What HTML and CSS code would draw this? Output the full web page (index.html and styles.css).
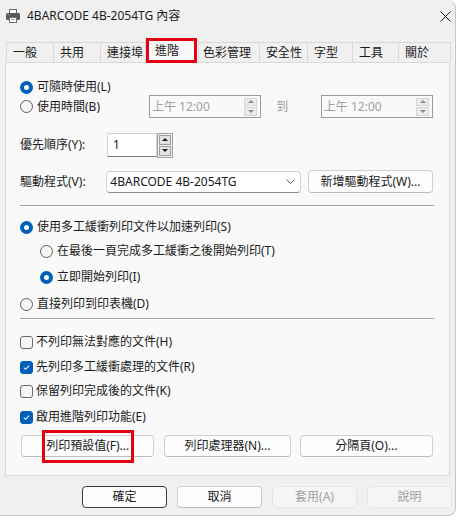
FILE: index.html
```html
<!DOCTYPE html>
<html lang="zh-Hant">
<head>
<meta charset="utf-8">
<title>4BARCODE 4B-2054TG 內容</title>
<link rel="stylesheet" href="styles.css">
</head>
<body>
<div class="window">
  <div class="titlebar">
    <svg class="app-icon" viewBox="0 0 16 16" aria-hidden="true">
      <rect x="4.5" y="1.5" width="7" height="4" fill="#ffffff" stroke="#6e6e6e"/>
      <rect x="1" y="5" width="14" height="7" rx="1.5" fill="#5a5a5a"/>
      <rect x="2.5" y="6.5" width="2" height="1" fill="#9a9a9a"/>
      <rect x="4.5" y="9.5" width="7" height="5" fill="#ffffff" stroke="#6e6e6e"/>
      <line x1="6" y1="11.5" x2="10" y2="11.5" stroke="#a0a0a0"/>
    </svg>
    <span class="title">4BARCODE 4B-2054TG 內容</span>
    <svg class="close" viewBox="0 0 11 11" aria-hidden="true">
      <path d="M0.5 0.5 L10.5 10.5 M10.5 0.5 L0.5 10.5" stroke="#1b1b1b" stroke-width="1" fill="none"/>
    </svg>
  </div>

  <div class="tabs">
    <div class="tab t1">一般</div>
    <div class="tab t2">共用</div>
    <div class="tab t3">連接埠</div>
    <div class="tab t4 active">進階</div>
    <div class="tab t5">色彩管理</div>
    <div class="tab t6">安全性</div>
    <div class="tab t7">字型</div>
    <div class="tab t8">工具</div>
    <div class="tab t9">關於</div>
  </div>

  <div class="panel">
    <div class="opt r1"><span class="radio on"></span><span>可隨時使用(L)</span></div>

    <div class="row r2">
      <div class="opt opt-time"><span class="radio"></span><span>使用時間(B)</span></div>
      <div class="timebox">
        <span class="dim">上午 12:00</span>
        <span class="spin spin-dis"><span class="sb up"></span><span class="sb down"></span></span>
      </div>
      <span class="to dim">到</span>
      <div class="timebox">
        <span class="dim">上午 12:00</span>
        <span class="spin spin-dis"><span class="sb up"></span><span class="sb down"></span></span>
      </div>
    </div>

    <div class="row r3">
      <span class="label">優先順序(Y):</span>
      <div class="numbox">1</div>
      <span class="updown"><span class="sb up"></span><span class="sb down"></span></span>
    </div>

    <div class="row r4">
      <span class="label">驅動程式(V):</span>
      <div class="combo">
        <span>4BARCODE 4B-2054TG</span>
        <svg class="chev" viewBox="0 0 9 5" aria-hidden="true"><path d="M0.5 0.5 L4.5 4.5 L8.5 0.5" fill="none" stroke="#5a5a5a"/></svg>
      </div>
      <div class="btn btn-new">新增驅動程式(W)...</div>
    </div>

    <div class="sep s1"></div>

    <div class="opt o1"><span class="radio on"></span><span>使用多工緩衝列印文件以加速列印(S)</span></div>
    <div class="opt o2 sub"><span class="radio"></span><span>在最後一頁完成多工緩衝之後開始列印(T)</span></div>
    <div class="opt o3 sub"><span class="radio on"></span><span>立即開始列印(I)</span></div>
    <div class="opt o4"><span class="radio"></span><span>直接列印到印表機(D)</span></div>

    <div class="sep s2"></div>

    <div class="opt c1"><span class="check"></span><span>不列印無法對應的文件(H)</span></div>
    <div class="opt c2"><span class="check on"><svg viewBox="0 0 13 13" aria-hidden="true"><path d="M3.3 6.6 L5.4 8.7 L9.6 4.3" fill="none" stroke="#ffffff" stroke-width="1.2"/></svg></span><span>先列印多工緩衝處理的文件(R)</span></div>
    <div class="opt c3"><span class="check"></span><span>保留列印完成後的文件(K)</span></div>
    <div class="opt c4"><span class="check on"><svg viewBox="0 0 13 13" aria-hidden="true"><path d="M3.3 6.6 L5.4 8.7 L9.6 4.3" fill="none" stroke="#ffffff" stroke-width="1.2"/></svg></span><span>啟用進階列印功能(E)</span></div>

    <div class="btnrow">
      <div class="btn b-def">列印預設值(F)...</div>
      <div class="btn b-proc">列印處理器(N)...</div>
      <div class="btn b-sep">分隔頁(O)...</div>
    </div>
  </div>

  <div class="footer">
    <div class="btn fbtn default">確定</div>
    <div class="btn fbtn">取消</div>
    <div class="btn fbtn disabled">套用(A)</div>
    <div class="btn fbtn disabled">說明</div>
  </div>

  <div class="mark mark-tab"></div>
  <div class="mark mark-btn"></div>
</div>
</body>
</html>
```

FILE: styles.css
```css
* { box-sizing: border-box; }
html, body { margin: 0; padding: 0; }
body {
  background: #ffffff;
  font-family: "Noto Sans", "Noto Sans CJK TC", sans-serif;
  font-size: 12px;
  line-height: 16px;
  color: #1b1b1b;
}

.window {
  position: relative;
  width: 456px;
  height: 516px;
  background: #f0f0f0;
  border-right: 1px solid #c6c6c6;
  border-bottom: 1px solid #c6c6c6;
  border-radius: 0 8px 8px 0;
  overflow: hidden;
}

/* title bar */
.titlebar {
  height: 32px;
  display: flex;
  align-items: center;
  padding-left: 5px;
}
.app-icon { width: 16px; height: 16px; margin-right: 6px; flex: none; }
.title { flex: 1; }
.close { width: 11px; height: 11px; margin-right: 4px; flex: none; }

/* tabs */
.tabs {
  display: flex;
  align-items: flex-end;
  height: 22px;
  margin: 8px 0 0 6px;
  position: relative;
  z-index: 1;
}
.tab {
  height: 20px;
  border: 1px solid #d9d9d9;
  border-bottom: none;
  margin-right: -1px;
  padding-left: 6px;
  display: flex;
  align-items: center;
  background: #f0f0f0;
  white-space: nowrap;
}
.t1, .t2, .t3 { width: 48px; }
.t5 { width: 64px; }
.t6 { width: 49px; }
.t7 { width: 46px; }
.t8 { width: 47px; }
.t9 { width: 53px; }
.tab.active {
  position: relative;
  z-index: 2;
  width: 54px;
  height: 23px;
  margin: 0 -3px -1px -2px;
  padding-left: 9px;
  padding-bottom: 2px;
  background: #f9f9f9;
}

/* panel */
.panel {
  margin: 0 5px;
  background: #f9f9f9;
  border: 1px solid #d9d9d9;
  padding: 15px 16px 18px 14px;
}

.row { display: flex; align-items: center; }
.opt { display: flex; align-items: center; height: 20px; white-space: nowrap; }
.r1 { height: 18px; }
.r2 { height: 23px; margin-top: -1px; }
.r3 { height: 24px; margin-top: 15px; }
.r4 { height: 23px; margin-top: 13px; }

.opt-time { width: 130px; }
.sub { padding-left: 20px; }

.radio {
  width: 13px;
  height: 13px;
  border-radius: 50%;
  border: 1px solid #5f5f5f;
  background: #f6f6f6;
  margin-right: 4px;
  flex: none;
  display: flex;
  align-items: center;
  justify-content: center;
}
.radio.on { border: none; background: #005fb8; }
.radio.on::after {
  content: "";
  width: 5px;
  height: 5px;
  border-radius: 50%;
  background: #ffffff;
}

.check {
  width: 13px;
  height: 13px;
  border: 1px solid #6a6a6a;
  border-radius: 3px;
  background: #f6f6f6;
  margin-right: 3px;
  flex: none;
  display: flex;
}
.check.on { background: #005fb8; border-color: #005fb8; }
.check svg { width: 11px; height: 11px; }

.dim { color: #a0a0a0; }

.timebox {
  width: 113px;
  height: 23px;
  border: 1px solid #9a9a9a;
  background: #f9f9f9;
  display: flex;
  align-items: center;
  justify-content: space-between;
  padding: 0 3px 0 2px;
}
.to { width: 60px; padding-left: 15px; }

.spin {
  width: 13px;
  height: 18px;
  display: flex;
  flex-direction: column;
  gap: 1px;
}
.sb {
  flex: 1;
  display: flex;
  align-items: center;
  justify-content: center;
  background: #e3e3e3;
  border: 1px solid #c9c9c9;
}
.sb.up::after {
  content: "";
  border-left: 3px solid transparent;
  border-right: 3px solid transparent;
  border-bottom: 3px solid #1b1b1b;
}
.sb.down::after {
  content: "";
  border-left: 3px solid transparent;
  border-right: 3px solid transparent;
  border-top: 3px solid #1b1b1b;
}
.spin-dis .sb { background: #ececec; border-color: #d6d6d6; }
.spin-dis .sb.up::after { border-bottom-color: #8c8c8c; }
.spin-dis .sb.down::after { border-top-color: #8c8c8c; }

.label { width: 87px; white-space: nowrap; }

.numbox {
  width: 50px;
  height: 24px;
  border: 1px solid #d2d2d2;
  border-bottom-color: #7a7a7a;
  background: #ffffff;
  padding-left: 5px;
  display: flex;
  align-items: center;
}
.updown {
  width: 16px;
  height: 25px;
  border: 1px solid #a0a0a0;
  background: #f0f0f0;
  padding: 1px;
  display: flex;
  flex-direction: column;
  gap: 1px;
}
.updown .sb { border-color: #9e9e9e; }

.combo {
  width: 196px;
  height: 22px;
  border: 1px solid #d3d3d3;
  border-bottom-color: #8f8f8f;
  border-radius: 4px;
  background: #ffffff;
  padding: 0 5px 0 3px;
  display: flex;
  align-items: center;
  justify-content: space-between;
  margin-right: 7px;
}
.chev { width: 9px; height: 5px; }

.btn {
  height: 22px;
  border: 1px solid #d0d0d0;
  border-bottom-color: #bcbcbc;
  border-radius: 4px;
  background: #fdfdfd;
  display: flex;
  align-items: center;
  justify-content: center;
  white-space: nowrap;
}
.btn-new { width: 126px; height: 23px; }

.sep {
  width: 414px;
  height: 2px;
  border-top: 1px solid #a0a0a0;
  border-bottom: 1px solid #ffffff;
}
.s1 { margin-top: 12px; }
.o1 { margin-top: 10px; }
.o2 { margin-top: 4px; }
.o3 { margin-top: 6px; }
.o4 { margin-top: 7px; }
.s2 { margin-top: 4px; }
.c1 { margin-top: 12px; }
.c2 { margin-top: 5px; }
.c3 { margin-top: 4px; }
.c4 { margin-top: 6px; }

.btnrow {
  display: flex;
  margin: 8px 0 0 1px;
}
.b-def { width: 134px; }
.b-proc { width: 127px; margin-left: 10px; }
.b-sep { width: 134px; margin-left: 9px; }

/* footer */
.footer {
  display: flex;
  justify-content: flex-end;
  gap: 10px;
  margin-top: 10px;
  padding-right: 3px;
}
.fbtn { width: 85px; }
.fbtn.default { border-color: #3a3a3a; }
.fbtn.disabled { background: #f5f5f5; border-color: #e5e5e5; color: #a0a0a0; }

/* annotation marks */
.mark {
  position: absolute;
  border: 3px solid #e3000f;
  z-index: 5;
}
.mark-tab { left: 146px; top: 38px; width: 51px; height: 25px; }
.mark-btn { left: 42px; top: 430px; width: 92px; height: 33px; }
```
